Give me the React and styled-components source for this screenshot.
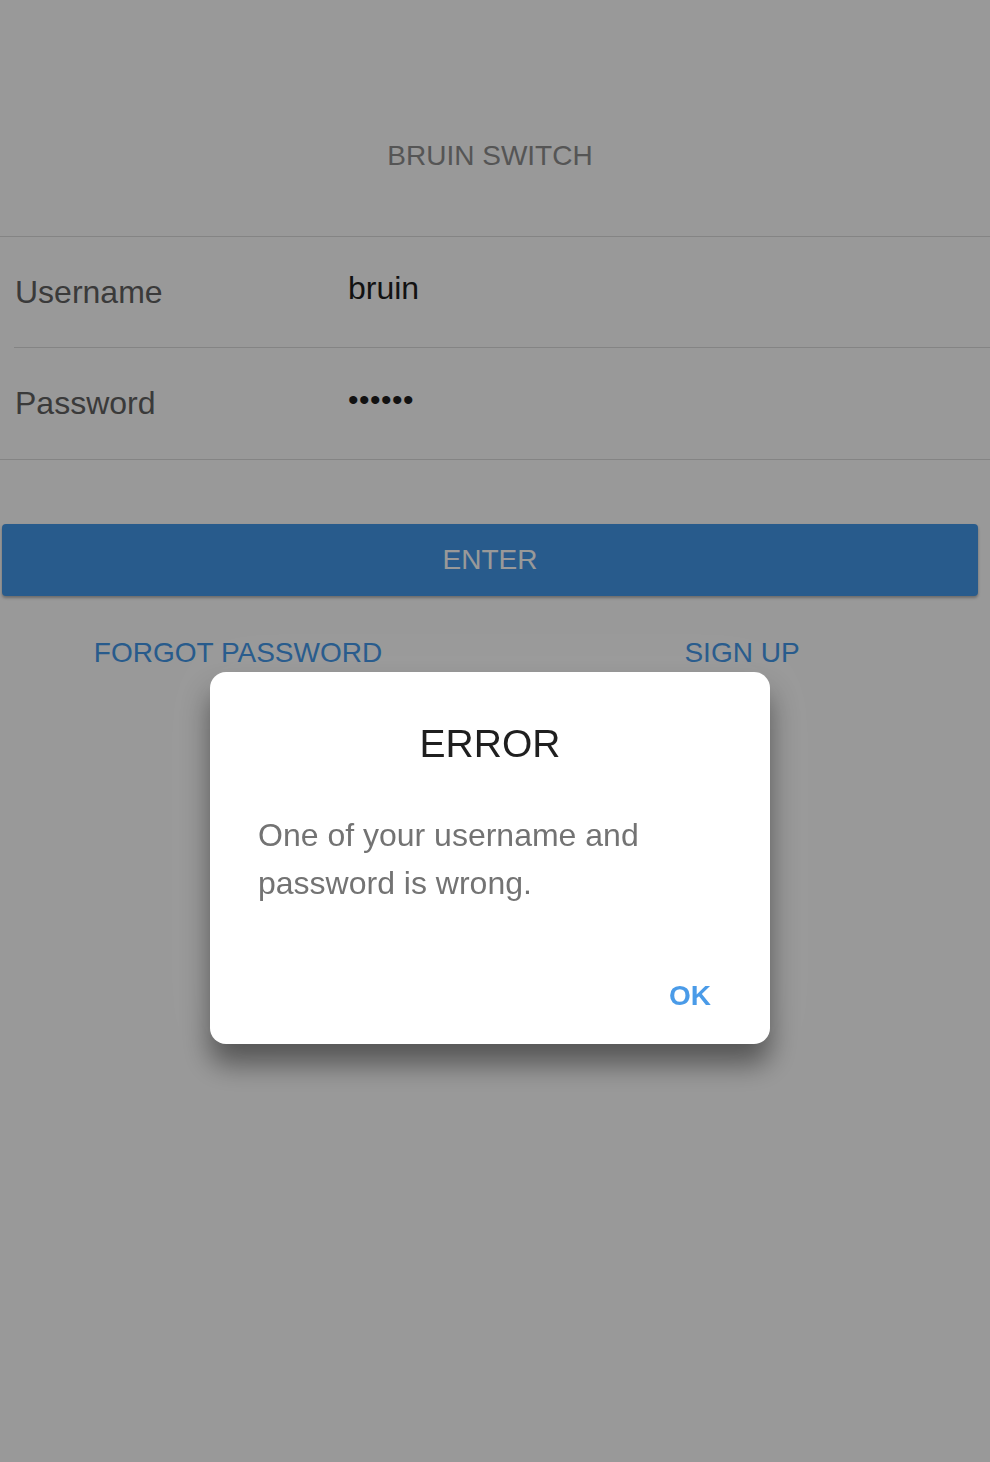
import React, { useState } from "react";
import styled, { createGlobalStyle } from "styled-components";

const GlobalStyle = createGlobalStyle`
    * { box-sizing: border-box; }
    body {
        margin: 0;
        background: #fff;
        font-family: "Liberation Sans", Arial, Helvetica, sans-serif;
    }
`;

export default function App() {
    const [username] = useState("bruin");
    const [password] = useState("123456");
    const [showError, setShowError] = useState(true);

    return (
        <Page>
            <GlobalStyle />
            <Header>
                <Title>BRUIN SWITCH</Title>
            </Header>
            <FieldList>
                <FieldRow>
                    <Label>Username</Label>
                    <Value>{username}</Value>
                </FieldRow>
                <FieldRow>
                    <Label>Password</Label>
                    <Value dots>{"•".repeat(password.length)}</Value>
                </FieldRow>
            </FieldList>
            <EnterButton>ENTER</EnterButton>
            <LinkRow>
                <TextLink>FORGOT PASSWORD</TextLink>
                <TextLink>SIGN UP</TextLink>
            </LinkRow>

            {showError && (
                <Overlay>
                    <Dialog>
                        <DialogTitle>ERROR</DialogTitle>
                        <DialogMessage>
                            One of your username and password is wrong.
                        </DialogMessage>
                        <DialogActions>
                            <OkButton onClick={() => setShowError(false)}>OK</OkButton>
                        </DialogActions>
                    </Dialog>
                </Overlay>
            )}
        </Page>
    );
}

const Page = styled.div`
    min-height: 100vh;
    background: #fff;
`;
const Header = styled.div`
    height: 237px;
    padding-top: 140px;
    border-bottom: 1px solid #dcdcdc;
    display: flex;
    justify-content: center;
    padding-right: 10px;
`;
const Title = styled.h1`
    margin: 0;
    font-size: 28px;
    line-height: 32px;
    font-weight: normal;
    color: #8e8e8e;
`;
const FieldList = styled.div`
    padding-left: 14px;
    border-bottom: 1px solid #dcdcdc;
`;
const FieldRow = styled.div`
    display: grid;
    grid-template-columns: 334px 1fr;
    align-items: center;
    height: 111px;
    &:not(:last-child) {
        border-bottom: 1px solid #dcdcdc;
    }
`;
const Label = styled.span`
    font-size: 32px;
    color: #626262;
    padding-left: 1px;
`;
const Value = styled.span`
    font-size: ${(p) => (p.dots ? "30px" : "32px")};
    color: #1e1e1e;
    padding-bottom: 8px;
    letter-spacing: ${(p) => (p.dots ? "0.5px" : "0")};
`;
const EnterButton = styled.button`
    display: block;
    width: 976px;
    height: 72px;
    margin: 64px 0 0 2px;
    border: 0;
    border-radius: 4px;
    background: #4398e9;
    color: #fff;
    font-family: inherit;
    font-size: 28px;
    box-shadow: 0 2px 3px rgba(0, 0, 0, 0.3);
    cursor: pointer;
`;
const LinkRow = styled.div`
    display: grid;
    grid-template-columns: 1fr 1fr;
    column-gap: 28px;
    padding-right: 10px;
    margin-top: 41px;
`;
const TextLink = styled.a`
    text-align: center;
    font-size: 28px;
    line-height: 32px;
    color: #4398e9;
    cursor: pointer;
`;
const Overlay = styled.div`
    position: fixed;
    inset: 0;
    background: rgba(0, 0, 0, 0.4);
    display: flex;
    flex-direction: column;
    align-items: center;
    padding: 672px 10px 0 0;
`;
const Dialog = styled.div`
    width: 560px;
    background: #fff;
    border-radius: 16px;
    padding: 50px 59px 32px 48px;
    box-shadow: 0 20px 28px rgba(0, 0, 0, 0.45), 0 0 60px rgba(255, 255, 255, 0.04);
`;
const DialogTitle = styled.h2`
    margin: 0;
    text-align: center;
    padding-left: 11px;
    font-size: 39px;
    line-height: 44px;
    font-weight: normal;
    color: #1f1f1f;
`;
const DialogMessage = styled.p`
    margin: 45px 0 0;
    font-size: 32px;
    line-height: 48px;
    color: #737373;
`;
const DialogActions = styled.div`
    display: flex;
    justify-content: flex-end;
    margin-top: 73px;
`;
const OkButton = styled.button`
    border: 0;
    padding: 0;
    background: none;
    font-family: inherit;
    font-size: 28px;
    line-height: 32px;
    font-weight: bold;
    color: #4a9be8;
    cursor: pointer;
`;
